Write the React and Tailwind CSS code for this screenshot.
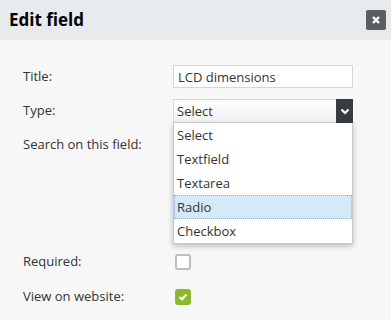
import { useState } from 'react';

const OPTIONS = ['Select', 'Textfield', 'Textarea', 'Radio', 'Checkbox'];

const Label = ({ children }) => (
  <div className="w-[150px] shrink-0 text-[13px] text-[#333]">{children}</div>
);

const App = () => {
  const [active] = useState('Radio');

  return (
    <div className="w-[391px] h-[320px] bg-[#f7f7f7] overflow-hidden font-['Open_Sans',sans-serif]">
      <div className="h-[40px] bg-[#e8ebee] flex items-center justify-between pl-[9px] pr-[5px]">
        <h1 className="text-[17px] font-bold text-black">Edit field</h1>
        <button className="w-[20px] h-[20px] bg-[#5a5e62] rounded-[2px] flex items-center justify-center">
          <svg width="10" height="10" viewBox="0 0 10 10">
            <path d="M2 2 L8 8 M8 2 L2 8" stroke="white" strokeWidth="2.4" />
          </svg>
        </button>
      </div>

      <div className="pt-[25px] pl-[23px]">
        <div className="flex items-center h-[23px]">
          <Label>Title:</Label>
          <input
            readOnly
            value="LCD dimensions"
            className="w-[180px] h-[23px] bg-white border border-[#d6d6d6] px-[4px] text-[13px] text-[#333] outline-none"
          />
        </div>

        <div className="flex items-center h-[24px] mt-[11px]">
          <Label>Type:</Label>
          <div className="relative w-[180px] h-[24px]">
            <div className="flex h-full border border-[#d6d6d6] bg-gradient-to-b from-white to-[#f1f1f1]">
              <span className="flex-1 px-[3px] leading-[22px] text-[13px] text-[#333]">Select</span>
              <span className="w-[17px] -my-px -mr-px bg-[#383c3f] flex items-center justify-center">
                <svg width="10" height="7" viewBox="0 0 10 7">
                  <path d="M1.5 1.5 L5 5 L8.5 1.5" stroke="white" strokeWidth="2.2" fill="none" />
                </svg>
              </span>
            </div>
            <ul className="absolute left-0 top-[24px] w-[180px] bg-white border border-t-0 border-[#c8c8c8] shadow-[0_2px_6px_rgba(0,0,0,0.25)] z-10">
              {OPTIONS.map((o) => (
                <li
                  key={o}
                  className={`h-[24px] px-[2px] leading-[22px] text-[13px] text-[#333] border border-dotted ${
                    o === active ? 'bg-[#d5eaf8] border-[#8fb0e0]' : 'border-transparent'
                  }`}
                >
                  {o}
                </li>
              ))}
            </ul>
          </div>
        </div>

        <div className="flex items-center h-[22px] mt-[11px]">
          <Label>Search on this field:</Label>
        </div>

        <div className="flex items-center h-[16px] mt-[98px]">
          <Label>Required:</Label>
          <span className="ml-[2px] w-[16px] h-[16px] bg-white border-2 border-[#bdbdbd] rounded-[3px]" />
        </div>

        <div className="flex items-center h-[16px] mt-[19px]">
          <Label>View on website:</Label>
          <span className="ml-[2px] w-[16px] h-[16px] bg-[#8cb82b] rounded-[3px] flex items-center justify-center">
            <svg width="10" height="8" viewBox="0 0 10 8">
              <path d="M1.5 4 L4 6.3 L8.5 1.5" stroke="white" strokeWidth="2" fill="none" />
            </svg>
          </span>
        </div>
      </div>
    </div>
  );
};

export default App;
